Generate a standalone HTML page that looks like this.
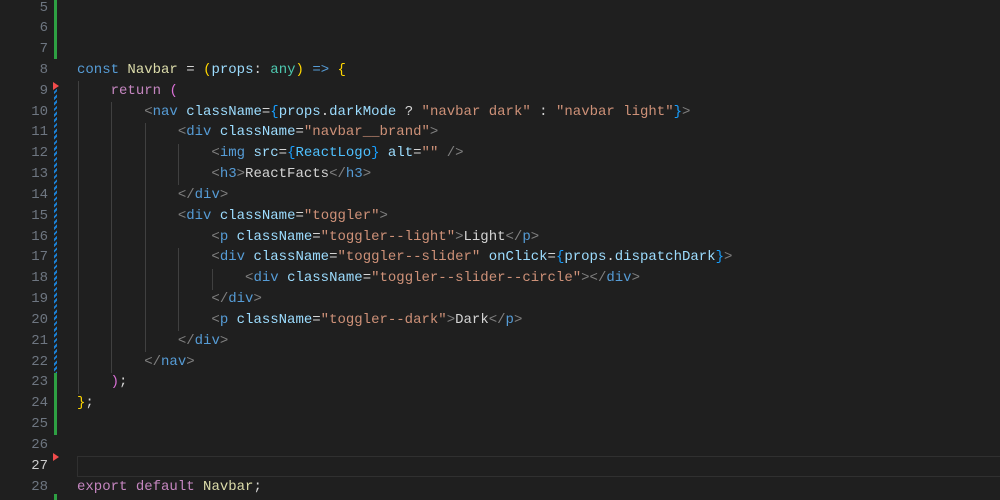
<!DOCTYPE html><html><head><style>
body{margin:0;background:#1f1f1f;width:1000px;height:500px;overflow:hidden;position:relative;font-family:"Liberation Mono",monospace;font-size:14px}
.ln{position:absolute;left:0;width:48px;text-align:right;color:#6e7681;height:20.83px;line-height:20.83px}
.c{position:absolute;left:77px;white-space:pre;color:#d4d4d4;height:20.83px;line-height:20.83px}
.k{color:#569cd6}.p{color:#c586c0}.f{color:#dcdcaa}.v{color:#9cdcfe}.t{color:#4ec9b0}.s{color:#ce9178}.g{color:#808080}.y{color:#ffd700}.m{color:#da70d6}.b{color:#179fff}.cst{color:#4fc1ff}
.bar{position:absolute;left:54px;width:3px}
.guide{position:absolute;width:1px;background:#404040}
</style></head><body>
<div class="bar" style="top:0;height:59px;background:#2ea043"></div>
<div class="bar" style="top:86px;height:287px;background:repeating-linear-gradient(135deg,#1b81d6 0 2px,#1f1f1f 2px 4px)"></div>
<div class="bar" style="top:373px;height:62px;background:#2ea043"></div>
<div class="bar" style="top:494px;height:6px;background:#2ea043"></div>
<div style="position:absolute;left:53px;top:82px;width:0;height:0;border-top:4px solid transparent;border-bottom:4px solid transparent;border-left:6px solid #f14c4c"></div>
<div style="position:absolute;left:53px;top:453px;width:0;height:0;border-top:4px solid transparent;border-bottom:4px solid transparent;border-left:6px solid #f14c4c"></div>
<div style="position:absolute;left:77px;top:456px;width:923px;height:19px;border:1px solid #303030;border-right:none"></div>
<div class="guide" style="left:78px;top:81px;height:313px"></div>
<div class="guide" style="left:111px;top:102px;height:271px"></div>
<div class="guide" style="left:145px;top:123px;height:229px"></div>
<div class="guide" style="left:178px;top:144px;height:41px"></div>
<div class="guide" style="left:178px;top:248px;height:83px"></div>
<div class="guide" style="left:212px;top:269px;height:21px"></div>
<div id="w"></div>
<script>
var L=[
"","","",
'<span class="k">const</span> <span class="f">Navbar</span> = <span class="y">(</span><span class="v">props</span>: <span class="t">any</span><span class="y">)</span> <span class="k">=&gt;</span> <span class="y">{</span>',
'    <span class="p">return</span> <span class="m">(</span>',
'        <span class="g">&lt;</span><span class="k">nav</span> <span class="v">className</span>=<span class="b">{</span><span class="v">props</span>.<span class="v">darkMode</span> ? <span class="s">"navbar dark"</span> : <span class="s">"navbar light"</span><span class="b">}</span><span class="g">&gt;</span>',
'            <span class="g">&lt;</span><span class="k">div</span> <span class="v">className</span>=<span class="s">"navbar__brand"</span><span class="g">&gt;</span>',
'                <span class="g">&lt;</span><span class="k">img</span> <span class="v">src</span>=<span class="b">{</span><span class="cst">ReactLogo</span><span class="b">}</span> <span class="v">alt</span>=<span class="s">""</span> <span class="g">/&gt;</span>',
'                <span class="g">&lt;</span><span class="k">h3</span><span class="g">&gt;</span>ReactFacts<span class="g">&lt;/</span><span class="k">h3</span><span class="g">&gt;</span>',
'            <span class="g">&lt;/</span><span class="k">div</span><span class="g">&gt;</span>',
'            <span class="g">&lt;</span><span class="k">div</span> <span class="v">className</span>=<span class="s">"toggler"</span><span class="g">&gt;</span>',
'                <span class="g">&lt;</span><span class="k">p</span> <span class="v">className</span>=<span class="s">"toggler--light"</span><span class="g">&gt;</span>Light<span class="g">&lt;/</span><span class="k">p</span><span class="g">&gt;</span>',
'                <span class="g">&lt;</span><span class="k">div</span> <span class="v">className</span>=<span class="s">"toggler--slider"</span> <span class="v">onClick</span>=<span class="b">{</span><span class="v">props</span>.<span class="v">dispatchDark</span><span class="b">}</span><span class="g">&gt;</span>',
'                    <span class="g">&lt;</span><span class="k">div</span> <span class="v">className</span>=<span class="s">"toggler--slider--circle"</span><span class="g">&gt;&lt;/</span><span class="k">div</span><span class="g">&gt;</span>',
'                <span class="g">&lt;/</span><span class="k">div</span><span class="g">&gt;</span>',
'                <span class="g">&lt;</span><span class="k">p</span> <span class="v">className</span>=<span class="s">"toggler--dark"</span><span class="g">&gt;</span>Dark<span class="g">&lt;/</span><span class="k">p</span><span class="g">&gt;</span>',
'            <span class="g">&lt;/</span><span class="k">div</span><span class="g">&gt;</span>',
'        <span class="g">&lt;/</span><span class="k">nav</span><span class="g">&gt;</span>',
'    <span class="m">)</span>;',
'<span class="y">}</span>;',
"","","",
'<span class="p">export</span> <span class="p">default</span> <span class="f">Navbar</span>;'
];
var h='';
for(var i=0;i<L.length;i++){var n=i+5,t=-2.5+i*20.83;
h+='<div class="ln" style="top:'+t+'px'+(n==27?';color:#cccccc':'')+'">'+n+'</div><div class="c" style="top:'+t+'px">'+L[i]+'</div>';}
document.getElementById('w').innerHTML=h;
</script>
</body></html>
